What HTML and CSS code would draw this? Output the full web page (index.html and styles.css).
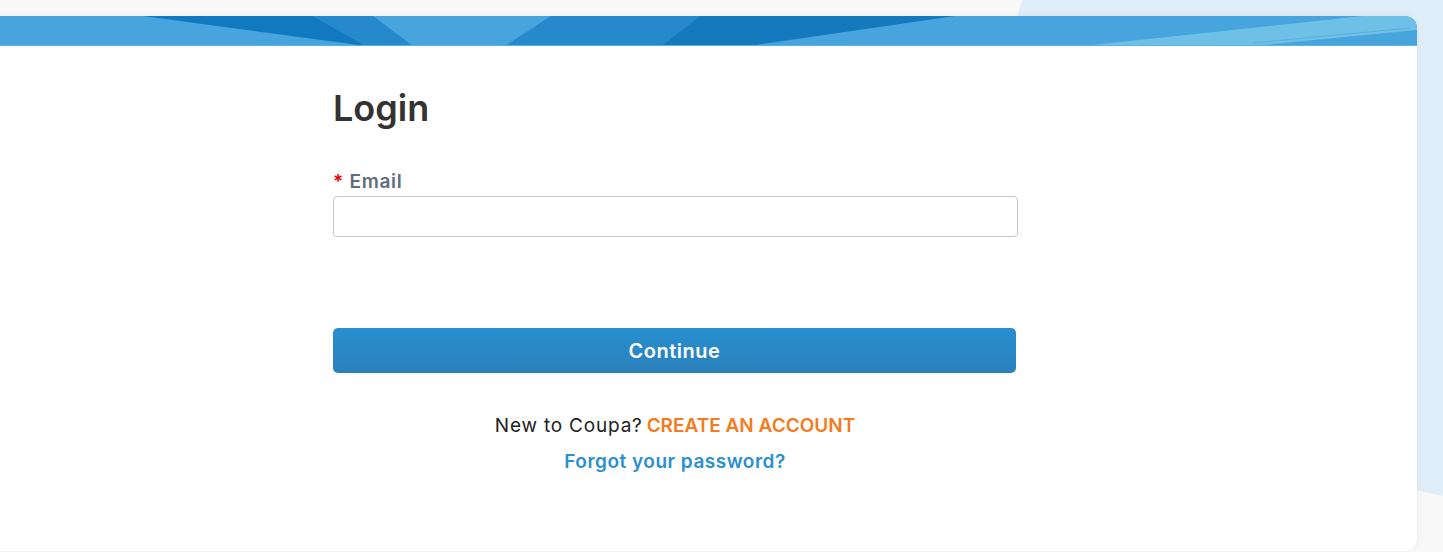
FILE: index.html
```html
<!DOCTYPE html>
<html lang="en">
<head>
  <meta charset="UTF-8">
  <title>Login</title>
  <link rel="stylesheet" href="styles.css">
</head>
<body>

  <svg class="fundo" viewBox="0 0 1443 552" preserveAspectRatio="none">
    <path d="M1023 0 L1443 0 L1443 496 C1000 400 998 40 1023 0 Z" fill="#dfeef9"/>
  </svg>

  <div class="cartao">
    <svg class="faixa" viewBox="-12 16 1429 30" preserveAspectRatio="none">
      <rect x="-12" y="16" width="1429" height="30" fill="#48a4dc"/>
      <polygon points="143,16 313,16 366,46" fill="#1079bf"/>
      <polygon points="313,16 373,16 413,46 366,46" fill="#2589cb"/>
      <polygon points="551,16 700,16 661,46 505,46" fill="#2589cb"/>
      <polygon points="700,16 955,16 748,46 661,46" fill="#1479bd"/>
      <polygon points="1083,46 1363,16 1417,16 1417,30 1253,46" fill="#6ec0e6"/>
      <line x1="1253" y1="43" x2="1410" y2="28" stroke="#5aaedd" stroke-width="1"/>
      <rect x="-12" y="45" width="1429" height="1" fill="#5cb2e3"/>
    </svg>

    <div class="conteudo">
      <h1>Login</h1>

      <label class="rotulo" for="email"><span class="obrigatorio">*</span> Email</label>
      <input class="campo" id="email" type="text">

      <button class="botao">Continue</button>

      <p class="novo">New to Coupa?<a href="#" class="criar">CREATE AN ACCOUNT</a></p>
      <p class="esqueci"><a href="#">Forgot your password?</a></p>
    </div>
  </div>

</body>
</html>
```

FILE: styles.css
```css
html, body {
  height: 100%;
}

body {
  font-family: Inter, "Open Sans", sans-serif;
  background-color: #f9f9f9;
  margin: 0;
  padding: 16px 26px 0 0;
  box-sizing: border-box;
  overflow: hidden;
  position: relative;
}

.fundo {
  position: absolute;
  top: 0;
  left: 0;
  width: 1443px;
  height: 552px;
}

.cartao {
  position: relative;
  margin-left: -12px;
  height: 535px;
  background-color: #ffffff;
  border-radius: 12px;
  overflow: hidden;
  box-shadow: 0 0 10px rgba(0, 0, 0, 0.06);
}

.faixa {
  display: block;
  width: 100%;
  height: 30px;
}

.conteudo {
  width: 684px;
  margin-left: 345px;
  padding-top: 40px;
}

h1 {
  margin: 0;
  font-size: 36px;
  font-weight: 600;
  color: #333333;
  line-height: 44px;
}

.rotulo {
  display: block;
  margin-top: 40px;
  font-size: 19px;
  font-weight: 600;
  letter-spacing: 0.7px;
  color: #5e6c7e;
  line-height: 24px;
}

.obrigatorio {
  color: #e60000;
}

.campo {
  display: block;
  box-sizing: border-box;
  width: 685px;
  height: 41px;
  margin-top: 2px;
  border: 1px solid #c9c9c9;
  border-radius: 4px;
  background: #ffffff;
}

.botao {
  display: block;
  width: 683px;
  height: 45px;
  margin-top: 91px;
  border: none;
  border-radius: 5px;
  background: linear-gradient(#288fcf, #2a80bb);
  color: #ffffff;
  font-family: inherit;
  font-size: 20px;
  font-weight: 600;
  letter-spacing: 0.5px;
  cursor: pointer;
}

.novo {
  margin: 41px 0 0;
  text-align: center;
  font-size: 19px;
  letter-spacing: 0.8px;
  color: #222222;
  line-height: 24px;
}

.novo a {
  margin-left: 4px;
  color: #f47b20;
  font-weight: 600;
  letter-spacing: 0;
  text-decoration: none;
}

.esqueci {
  margin: 12px 0 0;
  text-align: center;
  font-size: 19px;
  letter-spacing: 0.5px;
  line-height: 24px;
}

.esqueci a {
  color: #2b8fd0;
  font-weight: 600;
  text-decoration: none;
}
```
